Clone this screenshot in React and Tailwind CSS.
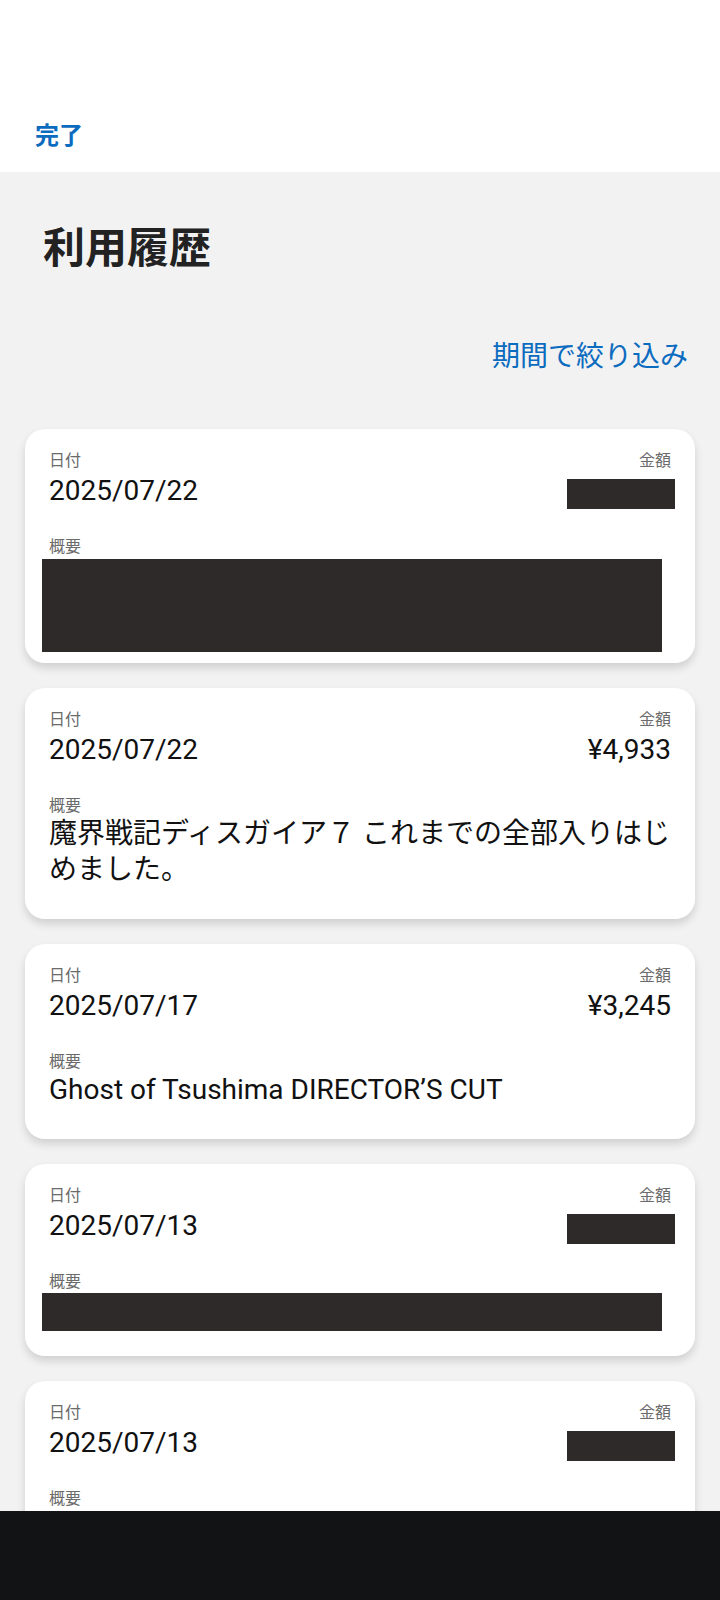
import React from "react";

const FONT = { fontFamily: "Roboto, 'Noto Sans CJK JP', sans-serif" };

// 利用履歴 entries; null fields are masked out
const HISTORY = [
  { date: "2025/07/22", amount: null, desc: null, maskLines: 2 },
  { date: "2025/07/22", amount: "¥4,933", desc: "魔界戦記ディスガイア７ これまでの全部入りはじめました。" },
  { date: "2025/07/17", amount: "¥3,245", desc: "Ghost of Tsushima DIRECTOR’S CUT" },
  { date: "2025/07/13", amount: null, desc: null, maskLines: 1 },
  { date: "2025/07/13", amount: null, desc: null, maskLines: 0 },
];

const Label = ({ children }) => (
  <p className="text-[16px] leading-5 text-[#6b6b6b]">{children}</p>
);

const Mask = ({ lines }) => {
  if (lines === 2) {
    return <div className="mt-[2px] mb-[11px] -ml-[7px] h-[93px] w-[620px] bg-[#2e2a29]" />;
  }
  if (lines === 1) {
    return <div className="mt-[1px] mb-[25px] -ml-[7px] h-[38px] w-[620px] bg-[#2e2a29]" />;
  }
  return <div className="h-[64px]" />;
};

const HistoryCard = ({ date, amount, desc, maskLines }) => (
  <div className="bg-white rounded-[20px] px-6 pt-[22px] shadow-[0_5px_8px_rgba(0,0,0,0.14)]">
    <div className="flex justify-between items-start">
      <div>
        <Label>日付</Label>
        <p className="text-[28px] leading-10 text-[#111]">{date}</p>
      </div>
      <div className="flex flex-col items-end">
        <Label>金額</Label>
        {amount ? (
          <p className="text-[28px] leading-10 text-[#111]">{amount}</p>
        ) : (
          <div className="mt-2 mb-[2px] -mr-1 h-[30px] w-[108px] bg-[#2e2a29]" />
        )}
      </div>
    </div>
    <div className="mt-[26px]">
      <Label>概要</Label>
    </div>
    {desc ? (
      <p className="-mr-1 text-[28px] leading-9 text-[#111] pb-[31px]">{desc}</p>
    ) : (
      <Mask lines={maskLines} />
    )}
  </div>
);

export default function App() {
  return (
    <div className="w-full h-[1600px] flex flex-col overflow-hidden bg-[#f2f2f2]" style={FONT}>
      <header className="h-[172px] shrink-0 bg-white flex items-end pl-[35px] pb-[18px]">
        <button className="text-[24px] leading-9 font-bold text-[#0b6bbf]">完了</button>
      </header>

      <main className="flex-1 min-h-0 overflow-hidden">
        <h1 className="pt-[52px] pl-[43px] text-[42px] leading-[50px] font-bold text-[#222]">利用履歴</h1>
        <div className="mt-[65px] flex justify-end pr-[32px]">
          <button className="text-[28px] leading-9 text-[#0b6bbf]">期間で絞り込み</button>
        </div>
        <div className="mt-[54px] px-[25px] flex flex-col gap-[25px]">
          {HISTORY.map((item, i) => (
            <HistoryCard key={i} {...item} />
          ))}
        </div>
      </main>

      <div className="h-[89px] shrink-0 bg-[#121314]" />
    </div>
  );
}
